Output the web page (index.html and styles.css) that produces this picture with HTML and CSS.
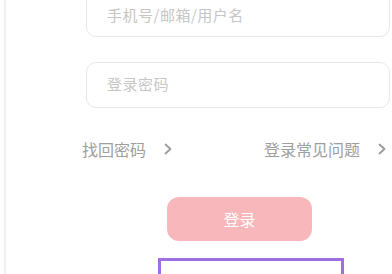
FILE: index.html
```html
<!DOCTYPE html>
<html lang="zh">
<head>
<meta charset="utf-8">
<link rel="stylesheet" href="styles.css">
</head>
<body>
<div class="frame">
  <div class="form">
    <div class="field field-first">手机号/邮箱/用户名</div>
    <div class="field field-second">登录密码</div>
    <div class="links">
      <div class="link">找回密码
        <svg class="chev" viewBox="0 0 8 12" width="8" height="12"><path d="M1.5 1.5 L6.5 6 L1.5 10.5" fill="none" stroke="#9a9a9a" stroke-width="1.8" stroke-linecap="round" stroke-linejoin="round"/></svg>
      </div>
      <div class="link">登录常见问题
        <svg class="chev" viewBox="0 0 8 12" width="8" height="12"><path d="M1.5 1.5 L6.5 6 L1.5 10.5" fill="none" stroke="#9a9a9a" stroke-width="1.8" stroke-linecap="round" stroke-linejoin="round"/></svg>
      </div>
    </div>
    <div class="btn">登录</div>
    <div class="outline"></div>
  </div>
</div>
</body>
</html>
```
FILE: styles.css
```css
html, body {
  margin: 0;
  padding: 0;
  background: #fff;
}
body {
  font-family: "Noto Sans CJK SC", "Noto Sans", sans-serif;
  width: 392px;
  height: 274px;
  overflow: hidden;
}
.frame {
  margin-left: 4px;
  border-left: 2px solid #f0f0f0;
  height: 274px;
  overflow: hidden;
}
.form {
  padding: 0 2px 0 80px;
  display: flex;
  flex-direction: column;
}
.field {
  box-sizing: border-box;
  height: 46px;
  border: 1px solid #e8e8e8;
  border-radius: 10px;
  display: flex;
  align-items: center;
  padding-left: 20px;
  font-size: 15px;
  color: #c6c6c6;
  letter-spacing: 0.5px;
}
.field-first {
  margin-top: -9px;
}
.field-second {
  margin-top: 25px;
  padding-bottom: 3px;
}
.links {
  margin: 30px 4px 0 -4px;
  height: 22px;
  display: flex;
  justify-content: space-between;
  align-items: center;
  font-size: 16px;
  color: #9e9e9e;
}
.link {
  display: flex;
  align-items: center;
  gap: 18px;
}
.btn {
  margin: 37px 0 0 81px;
  width: 145px;
  height: 44px;
  border-radius: 12px;
  background: #f8b7ba;
  color: #fff;
  font-size: 16px;
  display: flex;
  align-items: center;
  justify-content: center;
}
.outline {
  margin: 17px 0 0 72px;
  width: 186px;
  height: 60px;
  box-sizing: border-box;
  border: 3px solid #9d6fe3;
}
```
